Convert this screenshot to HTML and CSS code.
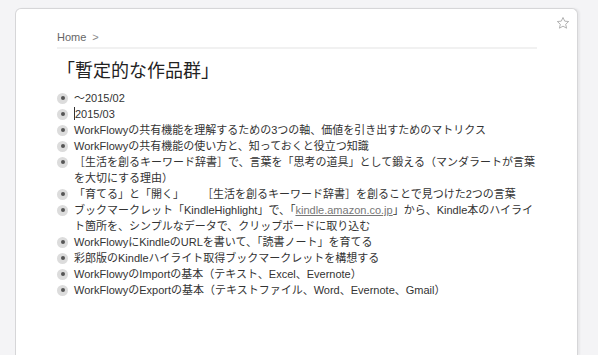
FILE: index.html
```html
<!DOCTYPE html>
<html lang="ja">
<head>
<meta charset="utf-8">
<link rel="stylesheet" href="styles.css">
</head>
<body>
<div class="card">
  <svg class="star" width="14" height="14" viewBox="0 0 24 24"><path d="M12 2.5l2.9 6.3 6.8.7-5.1 4.6 1.5 6.8L12 17.4l-6.1 3.5 1.5-6.8-5.1-4.6 6.8-.7z" fill="none" stroke="#a8a8a8" stroke-width="1.5" stroke-linejoin="round"/></svg>
  <div class="crumbs"><span class="home">Home</span><span class="sep">&gt;</span></div>
  <h1 class="title">「暫定的な作品群」</h1>
  <ul class="list">
    <li class="item"><span class="bullet"></span><span class="text">～2015/02</span></li>
    <li class="item"><span class="bullet"></span><span class="text"><span class="caret"></span>2015/03</span></li>
    <li class="item"><span class="bullet"></span><span class="text">WorkFlowyの共有機能を理解するための3つの軸、価値を引き出すためのマトリクス</span></li>
    <li class="item"><span class="bullet"></span><span class="text">WorkFlowyの共有機能の使い方と、知っておくと役立つ知識</span></li>
    <li class="item"><span class="bullet"></span><span class="text">［生活を創るキーワード辞書］で、言葉を「思考の道具」として鍛える（マンダラートが言葉を大切にする理由）</span></li>
    <li class="item"><span class="bullet"></span><span class="text">「育てる」と「開く」<span class="gap"></span>［生活を創るキーワード辞書］を創ることで見つけた2つの言葉</span></li>
    <li class="item"><span class="bullet"></span><span class="text">ブックマークレット「KindleHighlight」で、「<a class="link" href="#">kindle.amazon.co.jp</a>」から、Kindle本のハイライト箇所を、シンプルなデータで、クリップボードに取り込む</span></li>
    <li class="item"><span class="bullet"></span><span class="text">WorkFlowyにKindleのURLを書いて、「読書ノート」を育てる</span></li>
    <li class="item"><span class="bullet"></span><span class="text">彩郎版のKindleハイライト取得ブックマークレットを構想する</span></li>
    <li class="item"><span class="bullet"></span><span class="text">WorkFlowyのImportの基本（テキスト、Excel、Evernote）</span></li>
    <li class="item"><span class="bullet"></span><span class="text">WorkFlowyのExportの基本（テキストファイル、Word、Evernote、Gmail）</span></li>
  </ul>
</div>
</body>
</html>
```
FILE: styles.css
```css
html, body {
  margin: 0;
  padding: 0;
  background: #f4f4f6;
  height: 355px;
  overflow: hidden;
}
body {
  padding: 8px 0 0 15px;
  font-family: "Liberation Sans", "Noto Sans CJK JP", sans-serif;
  color: #333;
}
.card {
  position: relative;
  box-sizing: border-box;
  width: 563px;
  height: 347px;
  background: #fff;
  border: 1px solid #d6d6d8;
  border-bottom: none;
  border-radius: 6px 6px 0 0;
  box-shadow: 2px 0 2px rgba(0,0,0,0.05);
  padding: 21px 40px 0 41px;
}
.star {
  position: absolute;
  right: 7px;
  top: 7px;
}
.crumbs {
  font-size: 11px;
  line-height: 14px;
  color: #666;
  padding-bottom: 3px;
  border-bottom: 2px solid #f1f1f1;
}
.sep {
  margin-left: 6px;
  color: #888;
}
.title {
  margin: 0;
  font-size: 18px;
  font-weight: normal;
  line-height: 26px;
  padding-top: 7px;
  color: #222;
  font-family: "Noto Sans CJK JP", sans-serif;
}
.list {
  list-style: none;
  margin: 8px 0 0 0;
  padding: 0;
  font-size: 11px;
  line-height: 16px;
}
.item {
  display: flex;
  align-items: flex-start;
}
.bullet {
  flex: none;
  position: relative;
  width: 11px;
  height: 11px;
  margin: 2.5px 6px 0 0;
  border-radius: 50%;
  background: #dcdcdc;
}
.bullet::after {
  content: "";
  position: absolute;
  left: 3.5px;
  top: 3.5px;
  width: 4px;
  height: 4px;
  border-radius: 50%;
  background: #555;
}
.text {
  width: 463px;
}
.gap {
  display: inline-block;
  width: 18px;
}
.caret {
  display: inline-block;
  width: 1px;
  height: 13px;
  background: #333;
  vertical-align: -2px;
}
.link {
  color: #777;
  text-decoration: underline;
}
```
